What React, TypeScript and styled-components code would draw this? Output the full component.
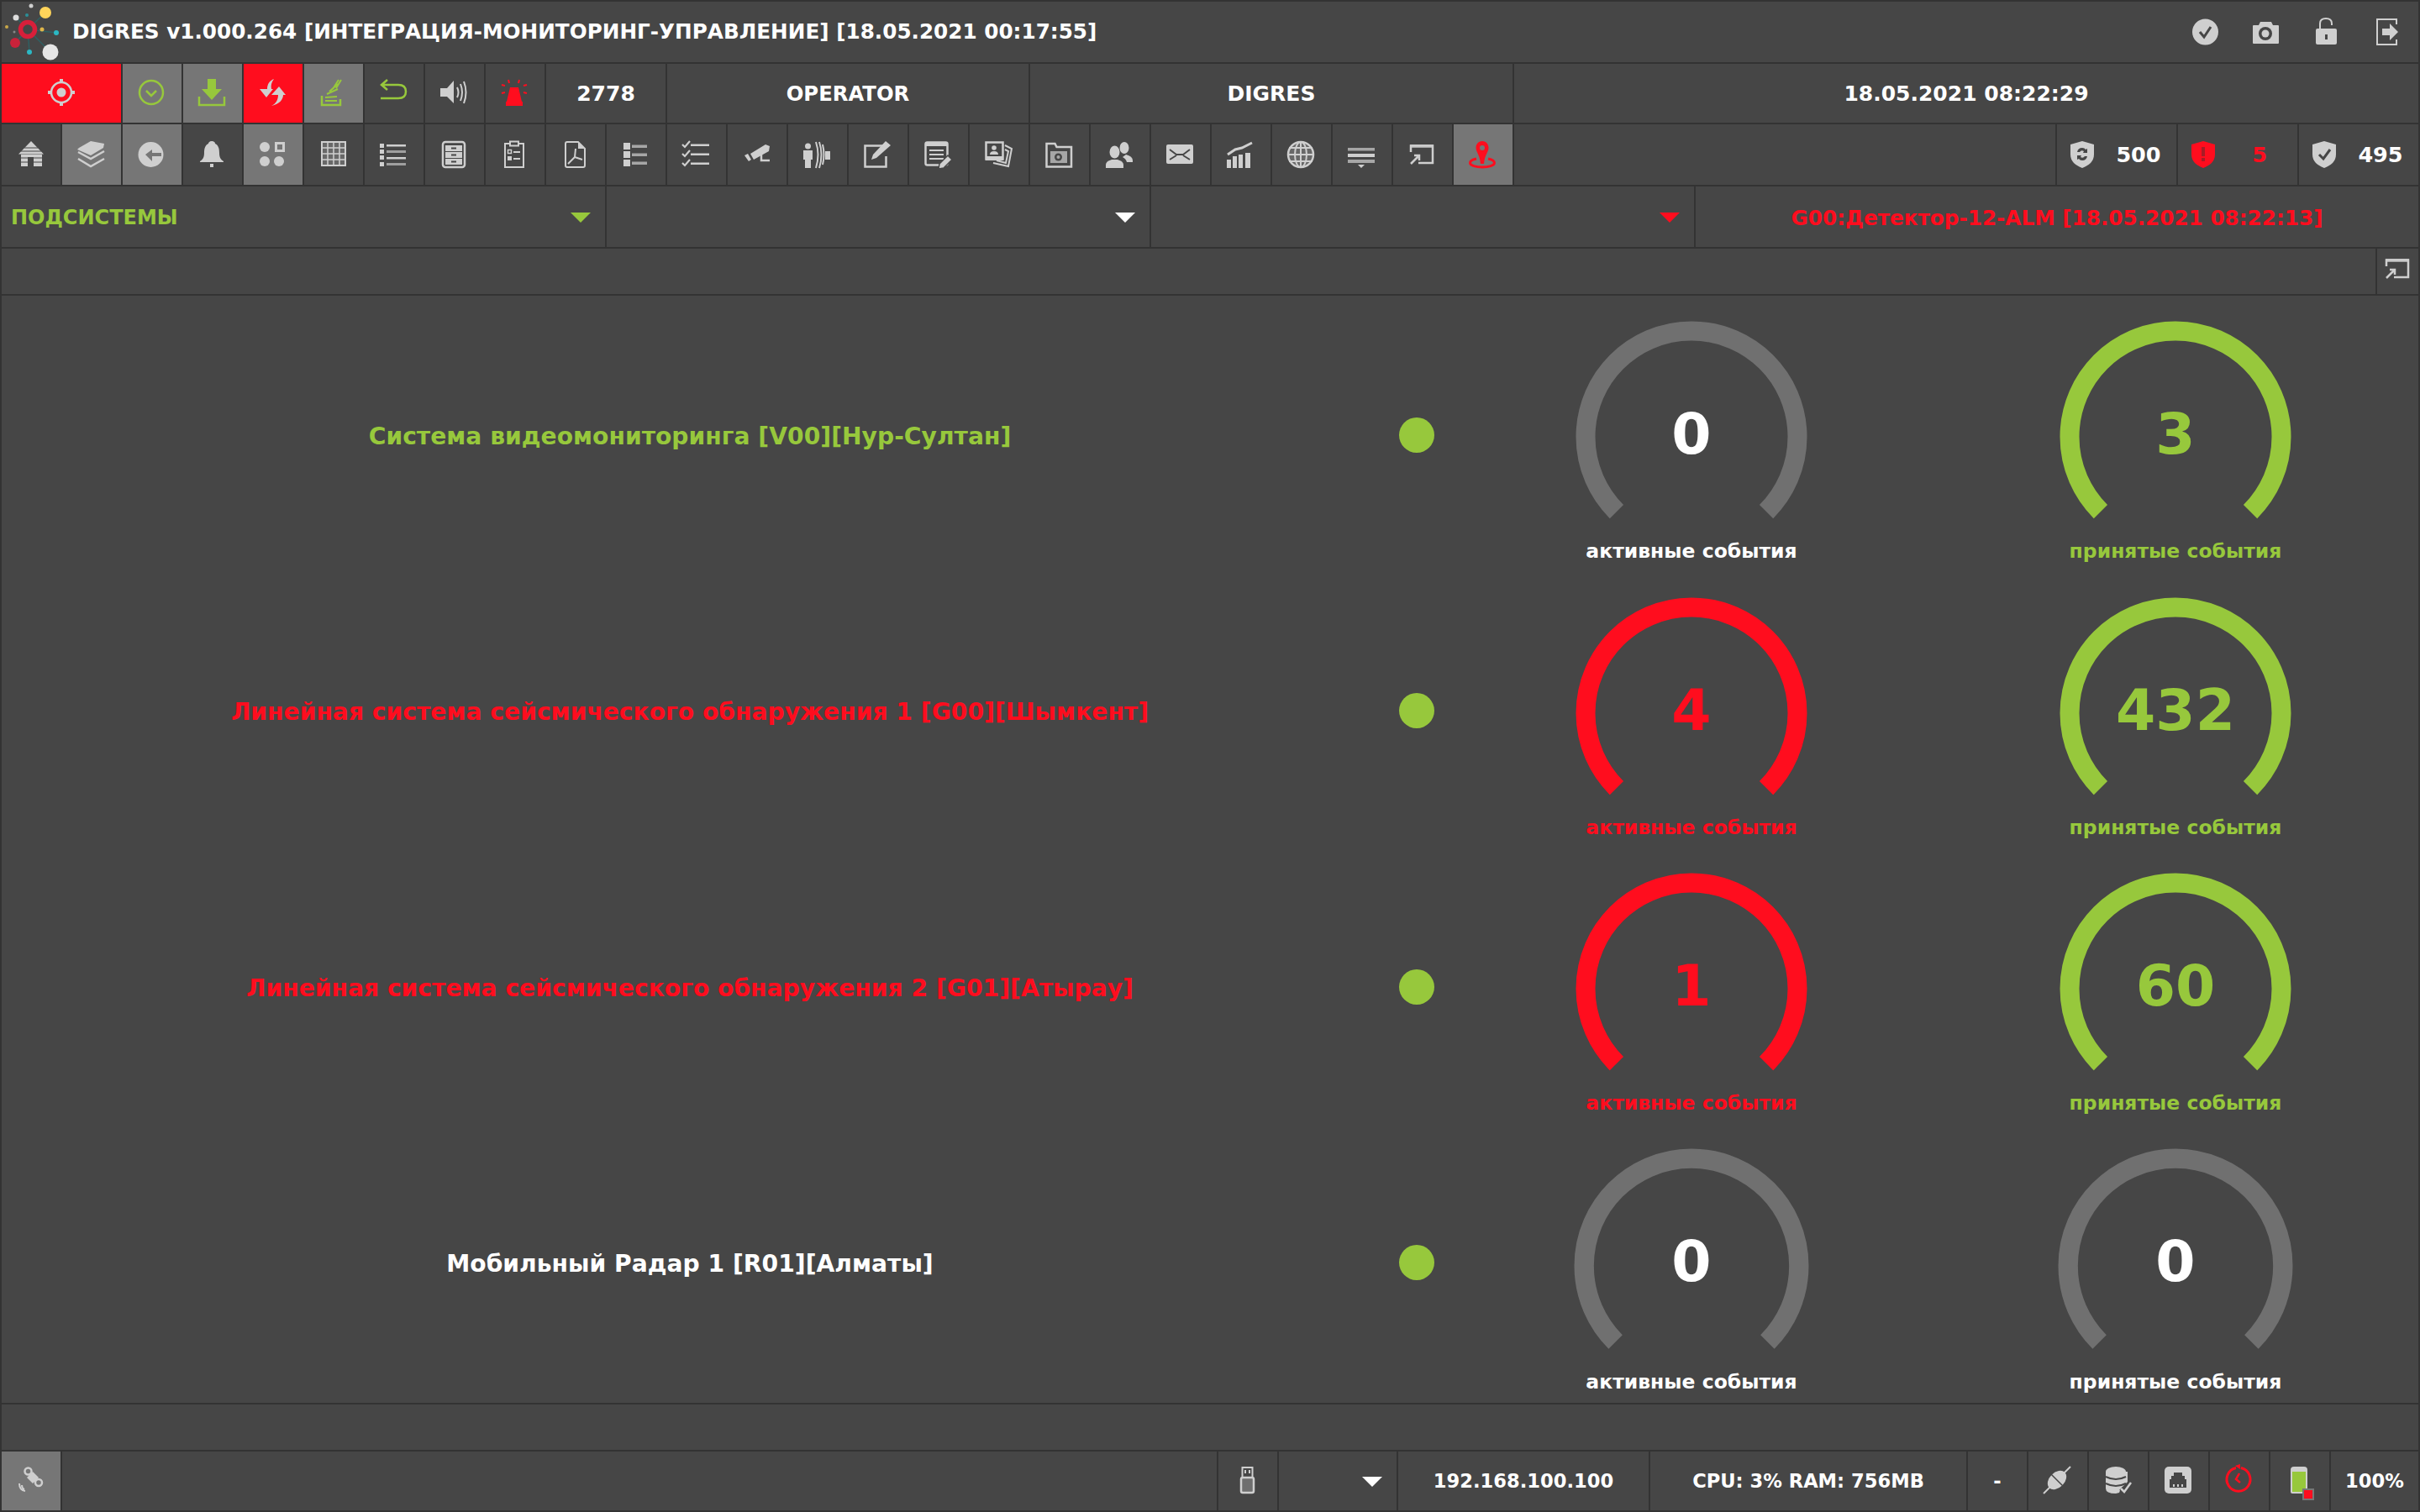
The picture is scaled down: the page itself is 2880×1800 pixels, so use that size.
import React from "react";
import styled, { createGlobalStyle } from "styled-components";

const GREEN = "#97c83c";
const RED = "#ff0d1e";
const BG = "#464646";
const LINE = "#333333";
const ACTIVE = "#767676";
const ICON = "#cfcfcf";

const GlobalStyle = createGlobalStyle`
  html, body { margin: 0; padding: 0; background: ${LINE}; }
  body { font-family: "DejaVu Sans", "Liberation Sans", sans-serif; }
`;

const Page = styled.div`
  width: 2880px;
  height: 1800px;
  box-sizing: border-box;
  padding: 2px;
  display: flex;
  flex-direction: column;
  gap: 2px;
  background: ${LINE};
  overflow: hidden;
`;

const Row = styled.div<{ $h: number }>`
  display: flex;
  gap: 2px;
  height: ${(p) => p.$h}px;
  flex-shrink: 0;
`;

const Cell = styled.div<{ $w?: number; $bg?: string; $color?: string }>`
  --cell: ${(p) => p.$bg || BG};
  width: ${(p) => (p.$w ? p.$w + "px" : "auto")};
  flex: ${(p) => (p.$w ? "0 0 auto" : "1 1 0")};
  background: var(--cell);
  color: ${(p) => p.$color || "#fff"};
  display: flex;
  align-items: flex-start;
  justify-content: center;
`;

const TextCell = styled(Cell)<{ $size?: number }>`
  align-items: center;
  font-size: ${(p) => p.$size || 25}px;
  font-weight: 700;
  white-space: nowrap;
`;

const HeaderBar = styled.div`
  flex: 1;
  background: ${BG};
  display: flex;
  align-items: flex-start;
  color: ${ICON};
  --cell: ${BG};
  padding-right: 3px;
`;

const Logo = styled.svg`
  width: 82px;
  height: 72px;
  flex-shrink: 0;
`;

const Title = styled.div`
  flex: 1;
  color: #fff;
  font-size: 24.7px;
  font-weight: 700;
  line-height: 72px;
  white-space: nowrap;
  padding-left: 2px;
`;

const HeaderIcons = styled.div`
  display: flex;
  gap: 2px;
`;

const Svg = styled.svg`
  width: 70px;
  height: 70px;
  display: block;
  flex-shrink: 0;
`;

const Stat = styled(Cell)`
  justify-content: flex-start;
  align-items: center;
  font-size: 25.5px;
  font-weight: 700;
`;

const ShieldBox = styled.svg`
  width: 60px;
  height: 72px;
  flex-shrink: 0;
`;

const StatValue = styled.span`
  flex: 1;
  text-align: center;
  padding-right: 8px;
`;

const SelectCell = styled(Cell)`
  align-items: center;
  justify-content: space-between;
  padding: 2px 17px 0 11px;
  box-sizing: border-box;
  font-size: 24px;
  font-weight: 700;
`;

const Caret = styled.span<{ $color: string }>`
  margin-left: auto;
  width: 0;
  height: 0;
  border-left: 12px solid transparent;
  border-right: 12px solid transparent;
  border-top: 12px solid ${(p) => p.$color};
`;

const AlertText = styled(TextCell)`
  font-size: 24.7px;
  padding-top: 2px;
`;

const Main = styled.div`
  flex: 1;
  min-height: 0;
  background: ${BG};
  display: flex;
  flex-direction: column;
`;

const SystemRow = styled.div`
  flex: 0 0 328.5px;
  display: flex;
  align-items: flex-start;
  min-height: 0;
`;

const SystemName = styled.div<{ $color: string }>`
  width: 1638px;
  height: 100%;
  display: flex;
  align-items: center;
  justify-content: center;
  padding-top: 6px;
  box-sizing: border-box;
  color: ${(p) => p.$color};
  font-size: 28.2px;
  font-weight: 700;
  white-space: nowrap;
`;

const DotBox = styled.div`
  width: 92px;
  height: 100%;
  display: flex;
  align-items: center;
  justify-content: center;
  padding-top: 3px;
  box-sizing: border-box;
`;

const Dot = styled.span`
  width: 42px;
  height: 42px;
  border-radius: 50%;
  background: ${GREEN};
`;

const Gauges = styled.div`
  display: flex;
  gap: 76px;
  margin-left: 31px;
`;

const GaugeBox = styled.div<{ $color: string; $top: number }>`
  width: 500px;
  padding-top: ${(p) => p.$top}px;
  display: flex;
  flex-direction: column;
  align-items: center;
  color: ${(p) => p.$color};
`;

const Dial = styled.div<{ $size: number }>`
  position: relative;
  width: ${(p) => p.$size}px;
  height: ${(p) => p.$size}px;
`;

const DialSvg = styled.svg`
  width: 100%;
  height: 100%;
  display: block;
`;

const DialValue = styled.span`
  position: absolute;
  left: 0;
  right: 0;
  top: 100px;
  text-align: center;
  font-size: 68px;
  line-height: 70px;
  font-weight: 700;
`;

const DialLabel = styled.div`
  margin-top: -17px;
  font-size: 23.5px;
  line-height: 30px;
  font-weight: 700;
  white-space: nowrap;
`;

const A = { fill: "none", stroke: "currentColor", strokeWidth: 2.5 };
const H = { fill: "var(--cell)" };
const HS = { fill: "none", stroke: "var(--cell)", strokeWidth: 2 };

const icons: Record<string, React.ReactNode> = {
  target: (
    <>
      <circle cx="35" cy="34" r="12" {...A} />
      <circle cx="35" cy="34" r="5.5" />
      <path d="M33 18h4v5h-4zM33 45h4v5h-4zM19 32h5v4h-5zM46 32h5v4h-5z" />
    </>
  ),
  okCircle: (
    <>
      <circle cx="34" cy="34" r="14" {...A} />
      <path d="M28 32l6 6 6-6" {...A} />
    </>
  ),
  download: (
    <>
      <path d="M29 18h10v12h7L34 43 22 30h7z" />
      <path d="M19 39v10h30V39" {...A} />
    </>
  ),
  sync: (
    <>
      <path d="M36 18c-5 2-8 6-8 12h-9l8 10 8-10h-2c-1-4 0-8 3-12z" />
      <path d="M33 50c5-2 8-7 8-13h-8l9-10 8 10h-3c0 5-4 11-14 13z" />
    </>
  ),
  signal: (
    <>
      <path d="M21 38v11h22v-7" {...A} />
      <path d="M25 44h14M25 40l14-1M27 36l13-6M30 33l10-9M34 30l7-11M38 29l6-10" {...A} strokeWidth={2} />
    </>
  ),
  undo: <path d="M27 19l-7 6 7 6M20 25h20q9 0 9 8t-9 8H19" {...A} />,
  speaker: (
    <>
      <path d="M18 29h8l8-9v27l-8-8h-8z" />
      <path d="M38 28q3 6 0 12M42 24q4 10 0 20M46 21q5 13 0 26" {...A} strokeWidth={2} />
    </>
  ),
  alarm: (
    <>
      <path d="M29 28h10l4 17H25zM24 45h20v5H24z" />
      <path d="M27 19l1 4M40 19l-1 4M19 25l4 1M49 25l-4 1M19 35l4-1M49 35l-4-1" {...A} strokeWidth={2} />
    </>
  ),
  home: (
    <>
      <path d="M35 20l15 15.500H20zM23 36h25v14H23z" />
      <path d="M27 28h16M23 32h24M23 40h25M23 45h25" {...HS} strokeWidth={1.2} />
      <path d="M31 39h7v11h-7z" {...H} />
    </>
  ),
  layers: (
    <>
      <path d="M34 20l16 3-1 5-15 9-16-7 2-2z" />
      <path d="M19 33l15 8 16-9M19 41l15 9 16-9" {...A} />
    </>
  ),
  back: (
    <>
      <circle cx="33.500" cy="36" r="15" />
      <path d="M27 36l8-6v4h11v4H35v6z" {...H} />
    </>
  ),
  bell: (
    <>
      <path d="M34 20c-3 0-4 2-4 3-4 2-5 6-5 11 0 6-2 8-5 10v1h28v-1c-3-2-5-4-5-10 0-5-1-9-5-11 0-1-1-3-4-3z" />
      <path d="M32 47h4v4h-4z" />
    </>
  ),
  dots: (
    <>
      <circle cx="25" cy="27" r="6" />
      <circle cx="25" cy="44" r="6" />
      <circle cx="42" cy="44" r="6" />
      <rect x="38.500" y="22.500" width="9" height="9" {...A} strokeWidth={3} />
    </>
  ),
  grid: (
    <>
      <rect x="21" y="21" width="28" height="28" fill="currentColor" fillOpacity={0.25} stroke="currentColor" strokeWidth={2} />
      <path d="M28 21v28M35 21v28M42 21v28M21 28h28M21 35h28M21 42h28" {...A} strokeWidth={1.500} />
    </>
  ),
  list: (
    <>
      <path d="M18 23h5v5h-5zM18 30h5v5h-5zM18 37h5v5h-5zM18 45h5v5h-5z" />
      <path d="M26 24h23v2.500H26zM26 39h23v2.500H26z" />
      <path d="M26 31h23v3H26zM26 46h23v3H26z" opacity={0.65} />
    </>
  ),
  cabinet: (
    <>
      <rect x="21" y="21" width="26" height="30" rx="3" {...A} />
      <path d="M24 25h20v7H24zM24 33h20v7H24zM24 41h20v7H24z" />
      <path d="M31 27.500h6v2h-6zM31 35.500h6v2h-6zM31 43.500h6v2h-6z" {...H} />
    </>
  ),
  clipboard: (
    <>
      <rect x="23" y="23" width="22" height="28" {...A} strokeWidth={2} />
      <rect x="29" y="20.500" width="10" height="5" {...A} strokeWidth={2} fill={BG} />
      <rect x="26.500" y="30.500" width="4" height="4" {...A} strokeWidth={1.500} />
      <path d="M26 38h5v5h-5zM33 32h8v2h-8zM33 40h8v2h-8z" />
    </>
  ),
  pdf: (
    <>
      <path d="M25 21h13l8 8v20q0 2-2 2H25q-2 0-2-2V23q0-2 2-2z" {...A} strokeWidth={2} />
      <path d="M38 21l8 8h-8z" />
      <path d="M35 29l-1 10-8 8M34 39l9 3" {...A} strokeWidth={2} />
    </>
  ),
  list2: (
    <>
      <path d="M20 22h8v8h-8zM20 32h8v8h-8zM20 42h8v8h-8z" />
      <path d="M30 24.500h18v3.500H30zM30 34.500h18v3.500H30zM30 44.500h18v3.500H30z" opacity={0.7} />
    </>
  ),
  checks: (
    <>
      <path d="M18 24l3 3 6-7M18 35l3 3 6-7M18 46l3 3 6-7" {...A} strokeWidth={2.200} />
      <path d="M28 23.500h22v2.500H28zM28 34.500h22v2.500H28zM28 45.500h22v2.500H28z" />
    </>
  ),
  cctv: (
    <>
      <path d="M27 35l18-11 5 2-1 6-18 10zM20 37l4-2 4 7-3 2z" />
      <path d="M40 36v7h10" {...A} />
    </>
  ),
  walk: (
    <>
      <circle cx="23.500" cy="26" r="3.500" />
      <path d="M18 31h11v11h-2v10h-7V42h-2z" />
      <path d="M33 21q5 15 0 31M37 21q5 15 0 31M41 24q3 12 0 24" {...A} strokeWidth={2} />
      <path d="M44 32h6v10h-6z" />
    </>
  ),
  edit: (
    <>
      <path d="M41 25.500H19.500v25h25V38" {...A} />
      <path d="M44 20l6 5-17 15-6 2 2-6z" />
    </>
  ),
  docEdit: (
    <>
      <rect x="19.500" y="21.500" width="26" height="27" rx="2" {...A} />
      <path d="M19 21h27v5H19zM24 30h17v2H24zM24 35h17v2H24zM24 40h17v2H24z" />
      <path d="M46 37l5 5-10 10-6 1 1-6z" fill="currentColor" stroke={BG} strokeWidth={1.500} />
    </>
  ),
  photos: (
    <>
      <rect x="19.500" y="21.500" width="20" height="20" {...A} />
      <path d="M19 38h21v5H19zM24 36q0-4 5-4t5 4z" />
      <circle cx="29" cy="28" r="2.800" />
      <path d="M42 25l8 4-4 21-18-4M42 30l4 2-3 14-11-3" {...A} strokeWidth={2} />
    </>
  ),
  camFolder: (
    <>
      <path d="M19.500 26v-3h10l2 4h17.500v23.500h-29.500z" {...A} />
      <rect x="24" y="32" width="20" height="14" opacity={0.7} />
      <circle cx="33.500" cy="39" r="4.500" {...H} />
      <circle cx="33.500" cy="39" r="2" opacity={0.7} />
    </>
  ),
  users: (
    <>
      <ellipse cx="40" cy="28" rx="5.500" ry="7" />
      <path d="M42 36q8 2 8 7v2h-7q-1-4-5-6z" />
      <ellipse cx="28.500" cy="33" rx="6" ry="7.500" />
      <path d="M18 52v-4q0-4 7-6h7q7 2 7 6v4z" />
    </>
  ),
  mail: (
    <>
      <rect x="18" y="24" width="32" height="23" rx="2" />
      <path d="M22 30l8 6h8l8-6M22 42l8-5M46 42l-8-5" {...HS} />
    </>
  ),
  chart: (
    <>
      <path d="M18 42h5v10h-5zM25 38h5v14h-5zM32 36h5v16h-5zM40 34h6v18h-6z" />
      <path d="M19 36l9-6 8-2 12-6" {...A} strokeWidth={3} />
    </>
  ),
  globe: (
    <>
      <circle cx="34" cy="36" r="15" {...A} fill="currentColor" fillOpacity={0.25} />
      <ellipse cx="34" cy="36" rx="7" ry="15" {...A} strokeWidth={2} />
      <path d="M34 21v30M20 28h28M19 36h30M20 44h28" {...A} strokeWidth={2} />
    </>
  ),
  lines: (
    <>
      <path d="M18 28h32v3.500H18zM18 42h32v4H18z" opacity={0.7} />
      <path d="M18 35h32v4H18zM30 48h8l-4 4z" />
    </>
  ),
  cast: (
    <>
      <path d="M21 33v-7.500h26v20.500H30" {...A} />
      <path d="M20 24h28v4H20z" opacity={0.7} />
      <path d="M21 47l9-9M25 37h6v6" {...A} />
    </>
  ),
  pin: (
    <>
      <path d="M34 20c-5 0-7.500 4-7.500 8 0 5 4.500 8 5.500 19h4c1-11 5.500-14 5.500-19 0-4-2.500-8-7.500-8z" />
      <circle cx="34" cy="28" r="3" {...H} />
      <path d="M27 41c-5 1-7.500 3-7.500 5 0 3 7 5 14.500 5s14.500-2 14.500-5c0-2-2.500-4-7.500-5" {...A} strokeWidth={3} />
    </>
  ),
  okFill: (
    <>
      <circle cx="35.500" cy="36" r="15.500" />
      <path d="M29 36l5 6 8-12" {...HS} strokeWidth={3} />
    </>
  ),
  camera: (
    <>
      <path d="M21 28h6l2-4h13l2 4h6q1 0 1 1v20q0 1-1 1H21q-1 0-1-1V29q0-1 1-1z" />
      <circle cx="35" cy="38" r="8" {...H} />
      <circle cx="35" cy="38" r="4.500" />
    </>
  ),
  lock: (
    <>
      <rect x="23" y="32" width="25" height="19" rx="2" />
      <path d="M28 32v-6q0-6 7-6t7 6v2" {...A} strokeWidth={2} />
      <path d="M34 39h3v6h-3z" {...H} />
    </>
  ),
  exit: (
    <>
      <path d="M47 27v-6H24v30h23v-6" {...A} strokeWidth={2} />
      <path d="M30 32h9v-6l10 10-10 10v-6h-9z" />
    </>
  ),
  satellite: (
    <>
      <path d="M37 24l7 7-7 7-7-7z" />
      <circle cx="31.500" cy="23.500" r="4" {...A} />
      <circle cx="44" cy="37" r="4" {...A} />
      <path d="M21 38q0 8 7 9M24 40q0 4 3 5" {...A} strokeWidth={2} />
    </>
  ),
  usb: (
    <>
      <rect x="28.500" y="19" width="12" height="12" {...A} strokeWidth={2} />
      <path d="M31 22h2v4h-2zM36 22h2v4h-2z" />
      <rect x="27" y="31" width="15" height="18" rx="2" {...A} fill="currentColor" fillOpacity={0.3} />
    </>
  ),
  plug: (
    <>
      <path d="M18 50l32-32" {...A} strokeWidth={2} />
      <ellipse cx="34" cy="34" rx="13" ry="9" transform="rotate(-45 34 34)" />
      <path d="M27 27l14 14" {...HS} strokeWidth={1.500} />
    </>
  ),
  db: (
    <>
      <ellipse cx="32" cy="24" rx="12" ry="6" />
      <path d="M20 24v20q0 6 12 6l4-1 2-5 8-8V24z" />
      <path d="M20 30q12 6 24 0M20 38q12 6 24 0" {...HS} />
      <path d="M38 44l4 4 8-11" fill="none" stroke={BG} strokeWidth={5} />
      <path d="M38 44l4 4 8-11" {...A} />
    </>
  ),
  ethernet: (
    <>
      <rect x="18" y="18" width="32" height="32" rx="5" />
      <path d="M29 25h10v4h3v4h2v10H24V33h2v-4h3z" {...H} />
      <path d="M28 39h2v3h-2zM33 39h2v3h-2zM38 39h2v3h-2z" />
    </>
  ),
  timer: (
    <>
      <path d="M37 19.500a14 14 0 1 1-6 0" {...A} strokeWidth={3} />
      <path d="M30 17l6-2v6z" />
      <path d="M35 26l-4 7 5 4" {...A} />
    </>
  ),
  battery: (
    <>
      <path d="M28 18h12q4 0 4 4v26q0 2-2 2H26q-2 0-2-2V22q0-4 4-4z" fill={ICON} />
      <rect x="26" y="24" width="16" height="24" fill={GREEN} />
      <rect x="38" y="44" width="14" height="14" fill={ACTIVE} />
      <rect x="40" y="46" width="10" height="10" fill={RED} />
    </>
  ),
};

const Icon = ({ name, box }: { name: string; box?: string }) => (
  <Svg viewBox={box || "0 0 70 70"} fill="currentColor" style={box ? { width: 49, height: 54 } : undefined}>
    {icons[name]}
  </Svg>
);

const toolbar: { name: string; active?: boolean; color?: string }[] = [
  { name: "home" },
  { name: "layers", active: true },
  { name: "back", active: true },
  { name: "bell" },
  { name: "dots", active: true },
  { name: "grid" },
  { name: "list" },
  { name: "cabinet" },
  { name: "clipboard" },
  { name: "pdf" },
  { name: "list2" },
  { name: "checks" },
  { name: "cctv" },
  { name: "walk" },
  { name: "edit" },
  { name: "docEdit" },
  { name: "photos" },
  { name: "camFolder" },
  { name: "users" },
  { name: "mail" },
  { name: "chart" },
  { name: "globe" },
  { name: "lines" },
  { name: "cast" },
  { name: "pin", active: true, color: RED },
];

const shields = [
  {
    value: "500",
    color: "#fff",
    shield: ICON,
    mark: <path d="M24 33q1-5 6-5 3 0 4 2l2-1v5h-5l1-2q-3-2-5 1zM36 38q-1 5-6 5-3 0-4-2l-2 1v-5h5l-1 2q3 2 5-1z" {...H} />,
  },
  { value: "5", color: RED, shield: RED, mark: <path d="M28 27h4v11h-4zM28 40h4v4h-4z" fill="#a81c26" /> },
  { value: "495", color: "#fff", shield: ICON, mark: <path d="M24 36l5 5 8-11" {...HS} strokeWidth={3} /> },
];

const systems = [
  { name: "Система видеомониторинга [V00][Нур-Султан]", color: GREEN, active: 0, accepted: 3 },
  { name: "Линейная система сейсмического обнаружения 1 [G00][Шымкент]", color: RED, active: 4, accepted: 432 },
  { name: "Линейная система сейсмического обнаружения 2 [G01][Атырау]", color: RED, active: 1, accepted: 60 },
  { name: "Мобильный Радар 1 [R01][Алматы]", color: "#fff", active: 0, accepted: 0 },
];

const Gauge = ({ value, label, text, arc, size }: { value: number; label: string; text: string; arc: string; size: number }) => (
  <GaugeBox $color={text} $top={size > 276 ? 29 : 30}>
    <Dial $size={size}>
      <DialSvg viewBox="0 0 276 276">
        <path d="M48.900 227.100A126 126 0 1 1 227.100 227.100" fill="none" stroke={arc} strokeWidth={23} />
      </DialSvg>
      <DialValue>{value}</DialValue>
    </Dial>
    <DialLabel>{label}</DialLabel>
  </GaugeBox>
);

export default function App() {
  return (
    <Page>
      <GlobalStyle />
      <Row $h={72}>
        <HeaderBar>
          <Logo viewBox="2 2 82 72">
            <path d="M60 62L33 35M54 15L33 35M67 39L33 35M35 62L33 35M19 21L33 35M18 51L33 35" stroke="#2f5f62" strokeWidth={1.500} />
            <circle cx="54" cy="15" r="7" fill="#ffd45a" />
            <circle cx="60" cy="62" r="9.500" fill="#e6e6e6" />
            <circle cx="33" cy="35" r="8.500" fill={BG} stroke="#d81f3a" strokeWidth={5.500} />
            <circle cx="18" cy="51" r="6" fill="#c9223a" />
            <circle cx="19" cy="21" r="3.500" fill="#dddddd" />
            <circle cx="37" cy="7" r="2.500" fill="#cfcfcf" />
            <circle cx="67" cy="39" r="3" fill="#2bb8c4" />
            <circle cx="35" cy="62" r="3" fill="#2bb8c4" />
            <circle cx="32" cy="18" r="2" fill="#2b8f98" />
            <circle cx="50" cy="35" r="2.500" fill="#e0b64a" />
            <circle cx="8" cy="32" r="2" fill="#c9a848" />
            <circle cx="17" cy="38" r="1.500" fill="#888" />
          </Logo>
          <Title>DIGRES v1.000.264 [ИНТЕГРАЦИЯ-МОНИТОРИНГ-УПРАВЛЕНИЕ] [18.05.2021 00:17:55]</Title>
          <HeaderIcons>
            <Icon name="okFill" />
            <Icon name="camera" />
            <Icon name="lock" />
            <Icon name="exit" />
          </HeaderIcons>
        </HeaderBar>
      </Row>

      <Row $h={70}>
        <Cell $w={142} $bg={RED} $color={ICON}>
          <Icon name="target" />
        </Cell>
        <Cell $w={70} $bg={ACTIVE} $color={GREEN}>
          <Icon name="okCircle" />
        </Cell>
        <Cell $w={70} $bg={ACTIVE} $color={GREEN}>
          <Icon name="download" />
        </Cell>
        <Cell $w={70} $bg={RED} $color={ICON}>
          <Icon name="sync" />
        </Cell>
        <Cell $w={70} $bg={ACTIVE} $color={GREEN}>
          <Icon name="signal" />
        </Cell>
        <Cell $w={70} $color={GREEN}>
          <Icon name="undo" />
        </Cell>
        <Cell $w={70} $color={ICON}>
          <Icon name="speaker" />
        </Cell>
        <Cell $w={70} $color={RED}>
          <Icon name="alarm" />
        </Cell>
        <TextCell $w={142}>2778</TextCell>
        <TextCell $w={430} $size={24.3}>OPERATOR</TextCell>
        <TextCell $w={574}>DIGRES</TextCell>
        <TextCell>18.05.2021 08:22:29</TextCell>
      </Row>

      <Row $h={72}>
        {toolbar.map((t) => (
          <Cell key={t.name} $w={70} $bg={t.active ? ACTIVE : BG} $color={t.color || ICON}>
            <Icon name={t.name} />
          </Cell>
        ))}
        <Cell />
        {shields.map((s) => (
          <Stat key={s.value} $w={142} $color={s.color}>
            <ShieldBox viewBox="0 0 60 72">
              <path d="M30 20l14 4v12c0 8-6 13-14 16-8-3-14-8-14-16V24z" fill={s.shield} />
              {s.mark}
            </ShieldBox>
            <StatValue>{s.value}</StatValue>
          </Stat>
        ))}
      </Row>

      <Row $h={72}>
        <SelectCell $w={718} $color={GREEN}>
          ПОДСИСТЕМЫ
          <Caret $color={GREEN} />
        </SelectCell>
        <SelectCell $w={646}>
          <Caret $color="#fff" />
        </SelectCell>
        <SelectCell $w={646}>
          <Caret $color={RED} />
        </SelectCell>
        <AlertText $color={RED}>G00:Детектор-12-ALM [18.05.2021 08:22:13]</AlertText>
      </Row>

      <Row $h={54}>
        <Cell />
        <Cell $w={49} $color={ICON}>
          <Icon name="cast" box="10 12 49 54" />
        </Cell>
      </Row>

      <Main>
        {systems.map((s, i) => {
          const activeOn = s.active > 0;
          const acceptedOn = s.accepted > 0;
          const size = i === 3 ? 280 : 276;
          return (
            <SystemRow key={s.name}>
              <SystemName $color={s.color}>{s.name}</SystemName>
              <DotBox>
                <Dot />
              </DotBox>
              <Gauges>
                <Gauge
                  value={s.active}
                  label="активные события"
                  text={activeOn ? RED : "#fff"}
                  arc={activeOn ? RED : "#707070"}
                  size={size}
                />
                <Gauge
                  value={s.accepted}
                  label="принятые события"
                  text={acceptedOn ? GREEN : "#fff"}
                  arc={acceptedOn ? GREEN : "#707070"}
                  size={size}
                />
              </Gauges>
            </SystemRow>
          );
        })}
      </Main>

      <Row $h={54}>
        <Cell />
      </Row>

      <Row $h={70}>
        <Cell $w={70} $bg={ACTIVE} $color={ICON}>
          <Icon name="satellite" />
        </Cell>
        <Cell />
        <Cell $w={70} $color={ICON}>
          <Icon name="usb" />
        </Cell>
        <SelectCell $w={140}>
          <Caret $color="#fff" />
        </SelectCell>
        <TextCell $w={298} $size={22.6}>192.168.100.100</TextCell>
        <TextCell $w={376} $size={22.6}>CPU: 3% RAM: 756MB</TextCell>
        <TextCell $w={70} $size={22.6}>-</TextCell>
        <Cell $w={70} $color={ICON}>
          <Icon name="plug" />
        </Cell>
        <Cell $w={70} $color={ICON}>
          <Icon name="db" />
        </Cell>
        <Cell $w={70} $color={ICON}>
          <Icon name="ethernet" />
        </Cell>
        <Cell $w={70} $color={RED}>
          <Icon name="timer" />
        </Cell>
        <Cell $w={70} $color={ICON}>
          <Icon name="battery" />
        </Cell>
        <TextCell $w={104} $size={22.6}>100%</TextCell>
      </Row>
    </Page>
  );
}
